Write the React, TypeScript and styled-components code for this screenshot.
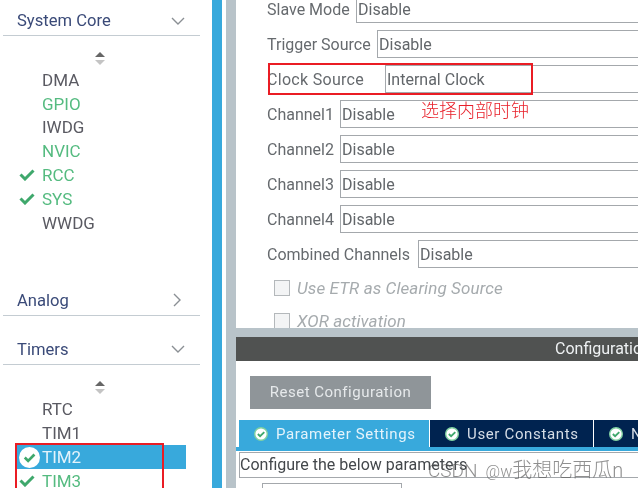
import styled, { createGlobalStyle } from "styled-components";

const GlobalStyle = createGlobalStyle`
	html, body {
		margin: 0;
		padding: 0;
		background: #fff;
	}
	body {
		font-family: Roboto, "Liberation Sans", sans-serif;
		overflow: hidden;
	}
`;

const Page = styled.div`
	position: relative;
	display: flex;
	width: 638px;
	height: 488px;
	overflow: hidden;
	filter: blur(0.3px);
`;

const Sidebar = styled.div`
	width: 212px;
	flex: none;
	padding: 0 12px 0 3px;
	box-sizing: border-box;
	overflow: hidden;
`;

const GroupHeader = styled.div<{ $top: number }>`
	display: flex;
	align-items: center;
	justify-content: space-between;
	box-sizing: border-box;
	height: 28px;
	margin-top: ${(p) => p.$top}px;
	padding: 0 15px 2px 14px;
	border-bottom: 1.5px solid #c4ccd2;
	font-size: 16.6px;
	color: #3a4a78;
`;

const ScrollArrows = styled.svg<{ $top: number }>`
	display: block;
	margin: ${(p) => p.$top}px 0 0 91px;
`;

const ItemList = styled.ul<{ $top: number }>`
	list-style: none;
	margin: ${(p) => p.$top}px 0 0;
	padding: 0;
`;

const Item = styled.li<{ $green?: boolean; $selected?: boolean }>`
	display: flex;
	align-items: center;
	width: 169px;
	height: 23.8px;
	margin-left: 14px;
	font-size: 17px;
	color: ${(p) => (p.$selected ? "#e4f3fb" : p.$green ? "#55bb80" : "#5a5a62")};
	background: ${(p) => (p.$selected ? "#38a9dc" : "transparent")};
`;

const ItemMark = styled.span`
	display: flex;
	align-items: center;
	width: 25px;
	box-sizing: border-box;
	padding-left: 1.5px;
	flex: none;
`;

const BlueBar = styled.div`
	width: 10px;
	flex: none;
	background: #38a9dc;
`;

const Gap = styled.div`
	width: 4px;
	flex: none;
`;

const GreyBar = styled.div`
	width: 10px;
	flex: none;
	background: #b8c3c9;
`;

const Main = styled.div`
	flex: 1;
	min-width: 0;
	display: flex;
	flex-direction: column;
	overflow: hidden;
`;

const FormArea = styled.div`
	flex: none;
	box-sizing: border-box;
	margin-top: -5px;
	height: 333px;
	padding-left: 31px;
	display: flex;
	flex-direction: column;
	gap: 7px;
	overflow: hidden;
`;

const Row = styled.div`
	display: flex;
	align-items: center;
	height: 28px;
	flex: none;
	font-size: 16px;
	color: #666a6e;
`;

const RowLabel = styled.span<{ $width: number; $spacing?: number }>`
	width: ${(p) => p.$width}px;
	flex: none;
	white-space: nowrap;
	letter-spacing: ${(p) => p.$spacing ?? 0}px;
`;

const SelectBox = styled.div`
	flex: 1;
	height: 28px;
	box-sizing: border-box;
	margin-right: -4px;
	padding-left: 1px;
	border: 1.5px solid #a4a8ac;
	display: flex;
	align-items: center;
	color: #62666a;
`;

const CheckRow = styled.div`
	display: flex;
	align-items: center;
	gap: 7px;
	height: 26px;
	flex: none;
	margin-left: 7px;
	font-size: 17px;
	letter-spacing: 0.1px;
	font-style: italic;
	color: #a6abae;
`;

const CheckBox = styled.span`
	width: 14px;
	height: 14px;
	flex: none;
	background: #f3f4f5;
	border: 1px solid #b4b8bb;
`;

const Splitter = styled.div`
	height: 9px;
	flex: none;
	background: #b8c3c9;
`;

const ConfigBar = styled.div`
	height: 24px;
	flex: none;
	box-sizing: border-box;
	padding-left: 319px;
	background: #505251;
	color: #eef1f3;
	font-size: 16px;
	line-height: 24px;
	white-space: nowrap;
`;

const ResetButton = styled.div`
	width: 181px;
	height: 33px;
	margin: 15px 0 11px 14px;
	flex: none;
	background: #8f9599;
	color: #e6e9eb;
	font-size: 15px;
	letter-spacing: 0.5px;
	line-height: 33px;
	text-align: center;
`;

const TabBar = styled.div`
	display: flex;
	height: 31px;
	flex: none;
	box-sizing: border-box;
	padding-left: 3px;
	border-bottom: 4px solid #38a9dc;
	gap: 1px;
`;

const Tab = styled.div<{ $active?: boolean; $width: number }>`
	display: flex;
	align-items: center;
	gap: 8px;
	width: ${(p) => p.$width}px;
	flex: none;
	box-sizing: border-box;
	padding-left: 15px;
	background: ${(p) => (p.$active ? "#38a9dc" : "#002350")};
	color: ${(p) => (p.$active ? "#e4f3fb" : "#d5dde6")};
	font-size: 15px;
	letter-spacing: 0.65px;
	white-space: nowrap;
	overflow: hidden;
`;

const HintBox = styled.div`
	height: 26px;
	flex: none;
	box-sizing: border-box;
	margin: 1px -4px 0 3px;
	padding-left: 0;
	border: 1.5px solid #a4a8ac;
	font-size: 16px;
	line-height: 23px;
	color: #43474b;
	white-space: nowrap;
`;

const LowerBox = styled.div`
	width: 140px;
	height: 20px;
	flex: none;
	margin: 5px 0 0 26px;
	box-sizing: border-box;
	border: 1.5px solid #a4a8ac;
`;

const RedFrame = styled.div<{ $x: number; $y: number; $w: number; $h: number }>`
	position: absolute;
	left: ${(p) => p.$x}px;
	top: ${(p) => p.$y}px;
	width: ${(p) => p.$w}px;
	height: ${(p) => p.$h}px;
	box-sizing: border-box;
	border: 2px solid #ea1c24;
`;

const Note = styled.div`
	position: absolute;
	left: 421px;
	top: 98px;
	font-family: "Noto Sans CJK SC", sans-serif;
	font-size: 18px;
	font-weight: 300;
	line-height: 22px;
	color: #e8202a;
`;

const Watermark = styled.div`
	position: absolute;
	left: 428px;
	top: 458px;
	display: flex;
	align-items: baseline;
	font-family: Roboto, "Noto Sans CJK SC", sans-serif;
	font-size: 19px;
	font-weight: 300;
	line-height: 24px;
	color: rgba(90, 90, 90, 0.68);
	white-space: nowrap;
`;

const MarkHandle = styled.span`
	margin-left: 8px;
	font-size: 16px;
`;

const MarkName = styled.span`
	font-size: 20px;
`;

const Chevron = ({ open }: { open: boolean }) => (
	<svg width="14" height="14" viewBox="0 0 14 14" fill="none" stroke="#8a8f94" strokeWidth="1.4">
		{open ? <path d="M1 4l6 6 6-6" /> : <path d="M3 1l6 6-6 6" />}
	</svg>
);

const Arrows = ({ top }: { top: number }) => (
	<ScrollArrows $top={top} width="12" height="14" viewBox="0 0 12 14">
		<path d="M6 0l5 5H1z" fill="#666" />
		<path d="M1 8h10l-5 5z" fill="#c4c4c4" />
	</ScrollArrows>
);

const Tick = () => (
	<svg width="16" height="12" viewBox="0 0 16 12" fill="none" stroke="#3fa86c" strokeWidth="3">
		<path d="M1.5 5.5l4.5 4.5 8.5-8.5" />
	</svg>
);

const RingTick = ({ size, ring }: { size: number; ring: string }) => (
	<svg width={size} height={size} viewBox="0 0 20 20" style={{ flex: "none" }}>
		<circle cx="10" cy="10" r="9" fill="#fff" stroke={ring} strokeWidth="2" />
		<path d="M5.5 10l3.2 3.2 6-6" fill="none" stroke="#3fa86c" strokeWidth="2.6" />
	</svg>
);

const systemCore = [
	{ name: "DMA" },
	{ name: "GPIO", green: true },
	{ name: "IWDG" },
	{ name: "NVIC", green: true },
	{ name: "RCC", green: true, tick: true },
	{ name: "SYS", green: true, tick: true },
	{ name: "WWDG" },
];

const channels = ["Channel1", "Channel2", "Channel3", "Channel4"];

const App = () => {
	return (
		<Page>
			<GlobalStyle />
			<Sidebar>
				<GroupHeader $top={8}>
					System Core
					<Chevron open />
				</GroupHeader>
				<Arrows top={16} />
				<ItemList $top={2}>
					{systemCore.map((item) => (
						<Item key={item.name} $green={item.green}>
							<ItemMark>{item.tick && <Tick />}</ItemMark>
							{item.name}
						</Item>
					))}
				</ItemList>
				<GroupHeader $top={53}>
					Analog
					<Chevron open={false} />
				</GroupHeader>
				<GroupHeader $top={21}>
					Timers
					<Chevron open />
				</GroupHeader>
				<Arrows top={16} />
				<ItemList $top={3}>
					<Item>
						<ItemMark />
						RTC
					</Item>
					<Item>
						<ItemMark />
						TIM1
					</Item>
					<Item $selected>
						<ItemMark>
							<RingTick size={21} ring="#fff" />
						</ItemMark>
						TIM2
					</Item>
					<Item $green>
						<ItemMark>
							<Tick />
						</ItemMark>
						TIM3
					</Item>
				</ItemList>
			</Sidebar>
			<BlueBar />
			<Gap />
			<GreyBar />
			<Main>
				<FormArea>
					<Row>
						<RowLabel $width={89}>Slave Mode</RowLabel>
						<SelectBox>Disable</SelectBox>
					</Row>
					<Row>
						<RowLabel $width={110}>Trigger Source</RowLabel>
						<SelectBox>Disable</SelectBox>
					</Row>
					<Row>
						<RowLabel $width={118} $spacing={0.3}>
							Clock Source
						</RowLabel>
						<SelectBox>Internal Clock</SelectBox>
					</Row>
					{channels.map((c) => (
						<Row key={c}>
							<RowLabel $width={73}>{c}</RowLabel>
							<SelectBox>Disable</SelectBox>
						</Row>
					))}
					<Row>
						<RowLabel $width={151}>Combined Channels</RowLabel>
						<SelectBox>Disable</SelectBox>
					</Row>
					<CheckRow>
						<CheckBox />
						Use ETR as Clearing Source
					</CheckRow>
					<CheckRow>
						<CheckBox />
						XOR activation
					</CheckRow>
				</FormArea>
				<Splitter />
				<ConfigBar>Configuration</ConfigBar>
				<ResetButton>Reset Configuration</ResetButton>
				<TabBar>
					<Tab $active $width={190}>
						<RingTick size={14} ring="#7fd0a0" />
						Parameter Settings
					</Tab>
					<Tab $width={163}>
						<RingTick size={14} ring="#7fd0a0" />
						User Constants
					</Tab>
					<Tab $width={60}>
						<RingTick size={14} ring="#7fd0a0" />
						NVIC Settings
					</Tab>
				</TabBar>
				<HintBox>Configure the below parameters</HintBox>
				<LowerBox />
			</Main>
			<RedFrame $x={268} $y={63} $w={265} $h={32} />
			<Note>选择内部时钟</Note>
			<RedFrame $x={15} $y={443} $w={149} $h={60} />
			<Watermark>
				CSDN
				<MarkHandle>@w</MarkHandle>
				<MarkName>我想吃西瓜n</MarkName>
			</Watermark>
		</Page>
	);
};

export default App;
